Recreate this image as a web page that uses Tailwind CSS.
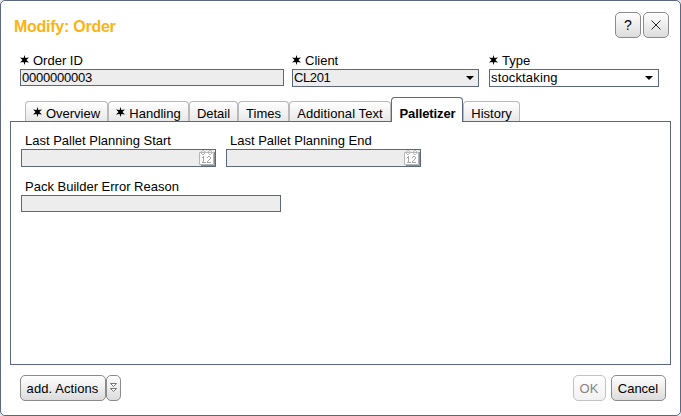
<!DOCTYPE html>
<html lang="en">
<head>
<meta charset="utf-8">
<title>Modify: Order</title>
<script src="https://cdn.jsdelivr.net/npm/@tailwindcss/browser@4"></script>
</head>
<body class="bg-[#e4e6ea] font-['Liberation_Sans',Arial,sans-serif] text-[13px] leading-[15px] text-black">
<svg class="hidden">
  <symbol id="star" viewBox="0 0 9 10"><path d="M4.5 0L5.4 3.1L9 2.4L6.4 5L9 7.6L5.4 6.9L4.5 10L3.6 6.9L0 7.6L2.6 5L0 2.4L3.6 3.1Z"/></symbol>
  <symbol id="cal" viewBox="0 0 16 16">
    <path d="M15.5 2V15.5H2" fill="none" stroke="#8e8e8e"/>
    <path d="M.5 2.5H14.5V14.5H.5Z" fill="#fff" stroke="#b5b5b5"/>
    <path d="M3 .5H5M10 .5H12M6 2.5H9M3 4.5H5M10 4.5H12M2.5 1V4M5.5 1V4M9.5 1V4M12.5 1V4" fill="none" stroke="#bcbcbc"/>
    <path d="M3 7.5H5M4.5 6V12M3 12.5H7M8 7.5H9M9 6.5H11M11.5 7V9M10 9.5H11M9.5 10V11M8.5 11V12M8 12.5H12" fill="none" stroke="#a5a5a5"/>
  </symbol>
</svg>
<div class="flex h-[416px] w-[681px] flex-col rounded-[5px] border border-[#5c6784] bg-white">
  <header class="flex h-[52px] justify-between pt-[11px] pr-[11px] pl-[13px]">
    <h1 class="pt-[6px] text-[16px] leading-[18px] font-bold tracking-[-0.26px] text-[#fab414]">Modify: Order</h1>
    <div class="flex gap-[2px]">
      <button class="flex h-[26px] w-[26px] items-center justify-center rounded-[5px] border border-[#8b8b8b] bg-linear-to-b from-white to-[#dcdcdc] text-[14px]">?</button>
      <button class="flex h-[26px] w-[26px] items-center justify-center rounded-[5px] border border-[#8b8b8b] bg-linear-to-b from-white to-[#dcdcdc]"><svg class="size-[10px]" viewBox="0 0 10 10"><path d="M.5 .5L9.5 9.5M9.5 .5L.5 9.5" stroke="#111" stroke-width=".9"/></svg></button>
    </div>
  </header>

  <section class="flex h-[43px] pl-[19px]">
    <div class="mr-[8px] w-[264px]">
      <div class="flex h-[16px] items-start gap-[4px]"><svg class="mt-[2px] h-[10px] w-[9px]"><use href="#star"/></svg><span>Order ID</span></div>
      <div class="h-[17px] border border-[#5c6784] bg-[#ededed] pl-px tracking-[-0.23px]">0000000003</div>
    </div>
    <div class="mr-[10px] w-[187px]">
      <div class="flex h-[16px] items-start gap-[4px]"><svg class="mt-[2px] h-[10px] w-[9px]"><use href="#star"/></svg><span>Client</span></div>
      <div class="flex h-[18px] items-start justify-between border border-[#5c6784] bg-[#ededed] pr-[4px] pl-px tracking-[-0.4px]"><span>CL201</span><svg class="mt-[6px] h-[4px] w-[8px]" viewBox="0 0 8 4"><path d="M0 0H8L4 4Z"/></svg></div>
    </div>
    <div class="w-[170px]">
      <div class="flex h-[16px] items-start gap-[4px]"><svg class="mt-[2px] h-[10px] w-[9px]"><use href="#star"/></svg><span>Type</span></div>
      <div class="flex h-[18px] items-start justify-between border border-[#5c6784] bg-white pr-[5px] pl-px tracking-[0.15px]"><span>stocktaking</span><svg class="mt-[6px] h-[4px] w-[8px]" viewBox="0 0 8 4"><path d="M0 0H8L4 4Z"/></svg></div>
    </div>
  </section>

  <nav class="z-10 -mb-px flex h-[26px] items-end pl-[24px]">
    <div class="mb-px flex h-[20px] w-[83px] items-center justify-center gap-[4px] rounded-t-[4px] border border-b-0 border-[#b9b9b9] bg-linear-to-b from-white to-[#e8e8e8] pt-[4px]"><svg class="mb-[3px] h-[10px] w-[9px]"><use href="#star"/></svg>Overview</div>
    <div class="mb-px flex h-[20px] w-[81px] items-center justify-center gap-[4px] rounded-t-[4px] border border-b-0 border-[#b9b9b9] bg-linear-to-b from-white to-[#e8e8e8] pt-[4px]"><svg class="mb-[3px] h-[10px] w-[9px]"><use href="#star"/></svg>Handling</div>
    <div class="mb-px flex h-[20px] w-[49px] items-center justify-center rounded-t-[4px] border border-b-0 border-[#b9b9b9] bg-linear-to-b from-white to-[#e8e8e8] pt-[4px]">Detail</div>
    <div class="mb-px flex h-[20px] w-[51px] items-center justify-center rounded-t-[4px] border border-b-0 border-[#b9b9b9] bg-linear-to-b from-white to-[#e8e8e8] pt-[4px]">Times</div>
    <div class="mb-px flex h-[20px] w-[102px] items-center justify-center rounded-t-[4px] border border-b-0 border-[#b9b9b9] bg-linear-to-b from-white to-[#e8e8e8] pt-[4px] tracking-[0.08px]">Additional Text</div>
    <div class="flex h-[25px] w-[72px] items-center justify-center rounded-t-[4px] border border-b-0 border-[#5c6784] bg-white pt-[7px] pl-px font-bold tracking-[-0.1px]">Palletizer</div>
    <div class="mb-px flex h-[20px] w-[57px] items-center justify-center rounded-t-[4px] border border-b-0 border-[#b9b9b9] bg-linear-to-b from-white to-[#e8e8e8] pt-[4px]">History</div>
  </nav>

  <main class="mx-[9px] h-[244px] border border-[#5c6784] pt-[11px] pl-[10px]">
    <div class="flex gap-[10px]">
      <div class="w-[195px]">
        <div class="h-[16px] pl-[4px]">Last Pallet Planning Start</div>
        <div class="flex h-[18px] justify-end border border-[#5c6784] bg-[#ededed]"><svg class="size-[16px]"><use href="#cal"/></svg></div>
      </div>
      <div class="w-[195px]">
        <div class="h-[16px] pl-[4px]">Last Pallet Planning End</div>
        <div class="flex h-[18px] justify-end border border-[#5c6784] bg-[#ededed]"><svg class="size-[16px]"><use href="#cal"/></svg></div>
      </div>
    </div>
    <div class="mt-[12px] w-[260px]">
      <div class="h-[16px] pl-[4px]">Pack Builder Error Reason</div>
      <div class="h-[17px] border border-[#5c6784] bg-[#ededed]"></div>
    </div>
  </main>

  <footer class="flex items-start pt-[10px] pr-[14px] pl-[19px]">
    <button class="h-[26px] w-[86px] rounded-[5px] border border-[#8b8b8b] bg-linear-to-b from-white to-[#dcdcdc] pr-px tracking-[0.08px]">add. Actions</button>
    <button class="flex h-[26px] w-[15px] items-center justify-center rounded-[5px] border border-[#8b8b8b] bg-linear-to-b from-white to-[#dcdcdc]"><svg class="h-[10px] w-[7px]" viewBox="0 0 7 10"><path d="M.5 .5H6.5L3.5 3.5ZM.5 5.5H6.5L3.5 8.5Z" fill="#fff" stroke="#555" stroke-width=".8"/></svg></button>
    <button class="ml-auto h-[26px] w-[33px] rounded-[5px] border border-[#c2c2c2] bg-linear-to-b from-white to-[#f1f1f1] pr-px text-[#858585]">OK</button>
    <button class="ml-[5px] h-[26px] w-[55px] rounded-[5px] border border-[#8b8b8b] bg-linear-to-b from-white to-[#dcdcdc] pr-px">Cancel</button>
  </footer>
</div>
</body>
</html>
